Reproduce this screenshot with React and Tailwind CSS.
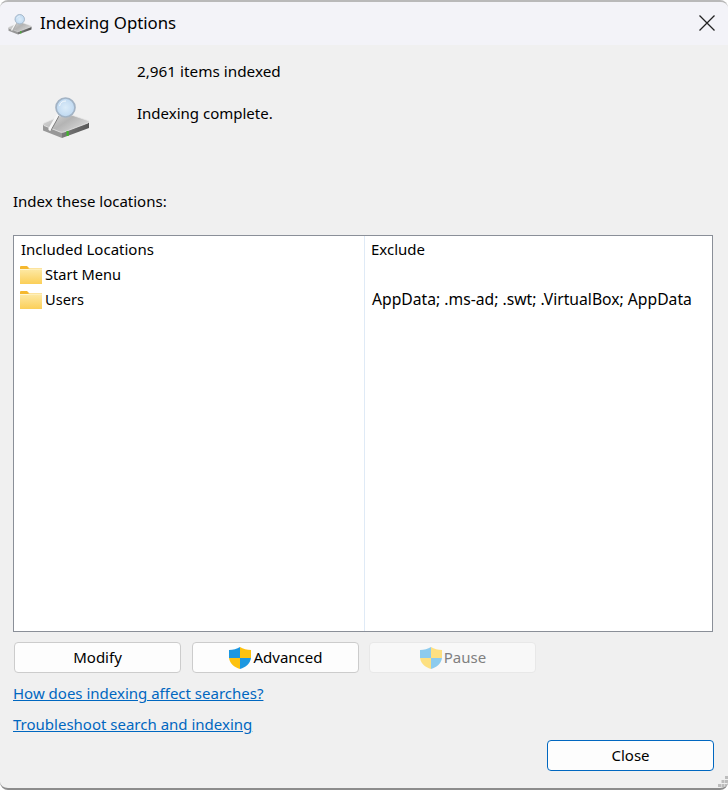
import React from "react";

function DiskIcon({ className, id }) {
  return (
    <svg viewBox="0 0 50 44" className={className}>
      <defs>
        <linearGradient id={id + "top"} x1="0" y1="0" x2="1" y2="0.6">
          <stop offset="0" stopColor="#e2e2e2" />
          <stop offset="0.55" stopColor="#b4b4b4" />
          <stop offset="1" stopColor="#d6d6d6" />
        </linearGradient>
        <linearGradient id={id + "right"} x1="0" y1="0" x2="1" y2="0">
          <stop offset="0" stopColor="#7c7c7c" />
          <stop offset="1" stopColor="#565656" />
        </linearGradient>
        <radialGradient id={id + "lens"} cx="0.5" cy="0.5" r="0.55">
          <stop offset="0" stopColor="#dcecf9" />
          <stop offset="0.75" stopColor="#c4dcf2" />
          <stop offset="1" stopColor="#9fc3e6" />
        </radialGradient>
      </defs>
      <path d="M1 29 L20 36.5 L20 43 L1 35.5 Z" fill="#989898" />
      <path d="M20 36.5 L47 27 L47 33 L20 43 Z" fill={`url(#${id}right)`} />
      <path d="M2 28 L22 19.5 Q25 18.5 28 19.5 L46 25.5 Q48 26.5 46 28 L22 37 Q20 37.7 18 37 L2 30.5 Q0 29 2 28 Z" fill={`url(#${id}top)`} stroke="#e9e9e9" strokeWidth="0.8" />
      <rect x="24.5" y="36" width="2.2" height="5" fill="#41b52c" />
      <path d="M16 20 L8 34" stroke="#f6f6f6" strokeWidth="3.2" strokeLinecap="round" />
      <path d="M17 21 L9.5 34.5" stroke="#6e6e6e" strokeWidth="0.9" strokeLinecap="round" />
      <circle cx="23.5" cy="12.5" r="9.5" fill={`url(#${id}lens)`} stroke="#a3b3c4" strokeWidth="1.7" />
      <path d="M17.5 11 A6.5 6.5 0 0 1 24 6" stroke="#ffffff" strokeWidth="1" fill="none" opacity="0.8" />
    </svg>
  );
}

function Folder() {
  return (
    <svg viewBox="0 0 22 18" className="w-[22px] h-[18px] shrink-0">
      <defs>
        <linearGradient id="fold" x1="0" y1="0" x2="0" y2="1">
          <stop offset="0" stopColor="#fdeaa8" />
          <stop offset="1" stopColor="#fbcf58" />
        </linearGradient>
      </defs>
      <path d="M0 1 Q0 0 1 0 H7 L9 2 H22 V5 H0 Z" fill="#f5b82e" />
      <path d="M0 3 H8 L10 2.5 H22 V18 H0 Z" fill="url(#fold)" />
      <path d="M0 3 H8 L10 2.5 H22 V3.5 H10 L8 4 H0 Z" fill="#fff6d2" />
    </svg>
  );
}

function Shield({ faded }) {
  const blue = faded ? "#8ccbee" : "#1c97e0";
  const yellow = faded ? "#fde081" : "#fdc20f";
  return (
    <svg viewBox="0 0 22 22" className="w-[22px] h-[22px] shrink-0">
      <path d="M11 0 C8 2 4 3 0 3 V11 H11 Z" fill={blue} />
      <path d="M11 0 C14 2 18 3 22 3 V11 H11 Z" fill={yellow} />
      <path d="M0 11 H11 V22 C5 20 1 17 0 11 Z" fill={yellow} />
      <path d="M22 11 H11 V22 C17 20 21 17 22 11 Z" fill={blue} />
    </svg>
  );
}

function Btn({ children, disabled, className = "" }) {
  return (
    <div
      className={
        "w-[167px] h-[31px] rounded-[4px] border flex items-center justify-center " +
        (disabled
          ? "bg-[#f8f8f8] border-[#e8e8e8] text-[#808080] "
          : "bg-[#fdfdfd] border-[#cccccc] text-black ") +
        className
      }
    >
      {children}
    </div>
  );
}

export default function App() {
  return (
    <div
      className="w-[728px] h-[790px] bg-white overflow-hidden text-[15px] leading-[22px] text-black"
      style={{ fontFamily: '"Noto Sans", "Open Sans", sans-serif' }}
    >
      <div className="h-full flex flex-col rounded-[8px] overflow-hidden bg-[#f0f0f0] border-t-2 border-t-[#b9b9b9] border-b-2 border-b-[#8c8c8c]">
        <div className="h-[43px] shrink-0 bg-[#f3f3f8] flex items-center pl-[8px] pr-[13px]">
          <DiskIcon id="s" className="w-[25px] h-[22px] shrink-0" />
          <span className="ml-[7px] text-[16.8px] -mt-[2px]">Indexing Options</span>
          <svg viewBox="0 0 16 16" className="ml-auto w-[16px] h-[16px] -mt-px">
            <path d="M0.5 0.5 L15.5 15.5 M15.5 0.5 L0.5 15.5" stroke="#222" strokeWidth="1.3" fill="none" />
          </svg>
        </div>

        <div className="flex-1 flex flex-col pl-[13px] pr-[14px] relative">
          <div className="flex h-[145px] shrink-0">
            <DiskIcon id="l" className="w-[50px] h-[44px] ml-[29px] mt-[50px] shrink-0" />
            <div className="ml-[45px] pt-[15px]">
              <div className="text-[15.3px]">2,961 items indexed</div>
              <div className="mt-[20px]">Indexing complete.</div>
            </div>
          </div>
          <div>Index these locations:</div>

          <div className="mt-[23px] mr-px h-[397px] shrink-0 bg-white border border-[#8a8f98] flex">
            <div className="w-[351px] shrink-0 border-r border-r-[#dfeaf6] pt-[2px]">
              <div className="pl-[7px] h-[24px]">Included Locations</div>
              <div className="pl-[6px] h-[25px] flex items-center gap-[3px]"><Folder /><span className="mb-[2px] text-[14.6px]">Start Menu</span></div>
              <div className="pl-[6px] h-[25px] flex items-center gap-[3px]"><Folder /><span className="mb-[2px] text-[14.6px]">Users</span></div>
            </div>
            <div className="flex-1 pt-[2px] pl-[6px]">
              <div className="h-[24px]">Exclude</div>
              <div className="h-[25px]" />
              <div className="h-[25px] flex items-center pl-px"><span className="mb-[2px] text-[15.7px]">AppData; .ms-ad; .swt; .VirtualBox; AppData</span></div>
            </div>
          </div>

          <div className="mt-[10px] ml-px flex gap-[10px]">
            <Btn className="mr-px"><span className="mb-[2px]">Modify</span></Btn>
            <Btn className="pl-px"><Shield /><span className="ml-[2px] mb-[2px]">Advanced</span></Btn>
            <Btn className="pl-px" disabled><Shield faded /><span className="ml-[2px] mb-[2px]">Pause</span></Btn>
          </div>

          <a className="mt-[9px] text-[#0067c0] underline self-start">How does indexing affect searches?</a>
          <a className="mt-[9px] text-[#0067c0] underline self-start">Troubleshoot search and indexing</a>

          <div className="mt-[5px] flex justify-end">
            <Btn className="!border-[#0067c0]"><span className="mb-[2px]">Close</span></Btn>
          </div>

          <svg viewBox="0 0 10 12" className="absolute right-0 bottom-0 w-[10px] h-[12px]">
            <g fill="#bdbdbd">
              <rect x="7" y="0" width="3" height="3" />
              <rect x="3.5" y="4" width="3" height="3" />
              <rect x="7" y="4" width="3" height="3" />
              <rect x="0" y="8" width="3" height="3" />
              <rect x="3.5" y="8" width="3" height="3" />
              <rect x="7" y="8" width="3" height="3" />
            </g>
          </svg>
        </div>
      </div>
    </div>
  );
}
